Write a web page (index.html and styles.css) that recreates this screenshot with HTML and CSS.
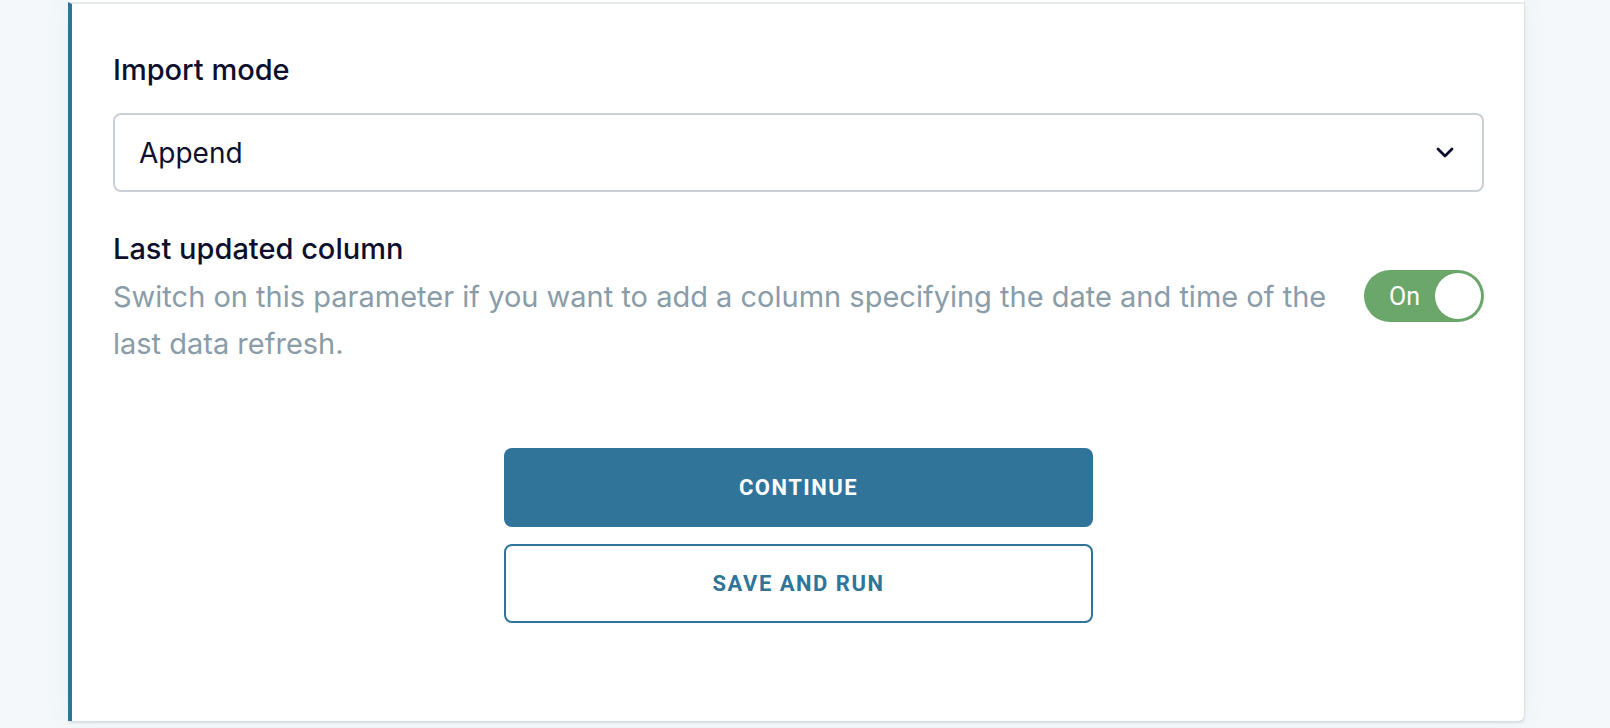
FILE: index.html
```html
<!DOCTYPE html>
<html lang="en">
<head>
<meta charset="utf-8">
<title>Import settings</title>
<link rel="stylesheet" href="styles.css">
</head>
<body>
<div class="page">
  <div class="card">
    <div class="section">
      <div class="field-label">Import mode</div>
      <div class="select">
        <span class="select-value">Append</span>
        <svg class="chevron" width="18" height="11" viewBox="0 0 18 11" aria-hidden="true">
          <path d="M2 2 L9 9 L16 2" fill="none" stroke="#0d0f2d" stroke-width="2.8" stroke-linecap="round" stroke-linejoin="round"/>
        </svg>
      </div>
      <div class="option-row">
        <div class="option-text">
          <div class="field-label">Last updated column</div>
          <div class="option-desc">Switch on this parameter if you want to add a column specifying the date and time of the last data refresh.</div>
        </div>
        <div class="toggle">
          <span class="toggle-label">On</span>
          <span class="toggle-knob"></span>
        </div>
      </div>
      <div class="actions">
        <button class="btn btn-primary">CONTINUE</button>
        <button class="btn btn-outline">SAVE AND RUN</button>
      </div>
    </div>
  </div>
</div>
</body>
</html>
```
FILE: styles.css
```css
* { box-sizing: border-box; }

html, body {
  margin: 0;
  height: 100%;
}

body {
  background: #f4f8fa;
  font-family: Inter, "Noto Sans", "Liberation Sans", sans-serif;
  color: #0d0f2d;
  overflow: hidden;
}

.page {
  padding: 0 86px 0 68px;
  height: 728px;
}

.card {
  width: 1456px;
  background: #ffffff;
  padding-top: 2px;
  border-bottom-right-radius: 6px;
  box-shadow: 1px 2px 2px rgba(60, 95, 125, 0.14), 0 0 28px rgba(60, 100, 140, 0.06);
}

.section {
  border-top: 2px solid #e6ebef;
  border-left: 4px solid #31749a;
  padding: 48px 40px 98px 41px;
}

.field-label {
  font-size: 29px;
  line-height: 36px;
  font-weight: 500;
  color: #0d0f2d;
}

.select {
  margin-top: 25px;
  height: 79px;
  border: 2px solid #cad0d5;
  border-radius: 8px;
  display: flex;
  align-items: center;
  justify-content: space-between;
  padding: 0 28px 0 24px;
}

.select-value {
  font-size: 28px;
  color: #0d0f2d;
}

.chevron { display: block; }

.option-row {
  margin-top: 39px;
  display: flex;
  align-items: flex-start;
  gap: 30px;
}

.option-text { flex: 1; }

.option-desc {
  margin-top: 6px;
  font-size: 29px;
  line-height: 47px;
  color: #8a9ca7;
}

.toggle {
  margin-top: 39px;
  width: 120px;
  height: 52px;
  border-radius: 26px;
  background: #6ba66b;
  display: flex;
  align-items: center;
  justify-content: space-between;
  padding: 0 3px 0 25px;
  flex-shrink: 0;
}

.toggle-label {
  color: #ffffff;
  font-family: Roboto, "Liberation Sans", sans-serif;
  font-size: 25px;
}

.toggle-knob {
  width: 46px;
  height: 46px;
  border-radius: 50%;
  background: #ffffff;
}

.actions {
  margin-top: 81px;
  display: flex;
  flex-direction: column;
  align-items: center;
  gap: 17px;
}

.btn {
  width: 589px;
  height: 79px;
  border-radius: 8px;
  font-family: Roboto, "Liberation Sans", sans-serif;
  font-weight: 700;
  font-size: 22px;
  letter-spacing: 1.5px;
  cursor: pointer;
}

.btn-primary {
  background: #31749a;
  border: none;
  color: #ffffff;
}

.btn-outline {
  background: #ffffff;
  border: 2px solid #31749a;
  color: #31749a;
}
```
